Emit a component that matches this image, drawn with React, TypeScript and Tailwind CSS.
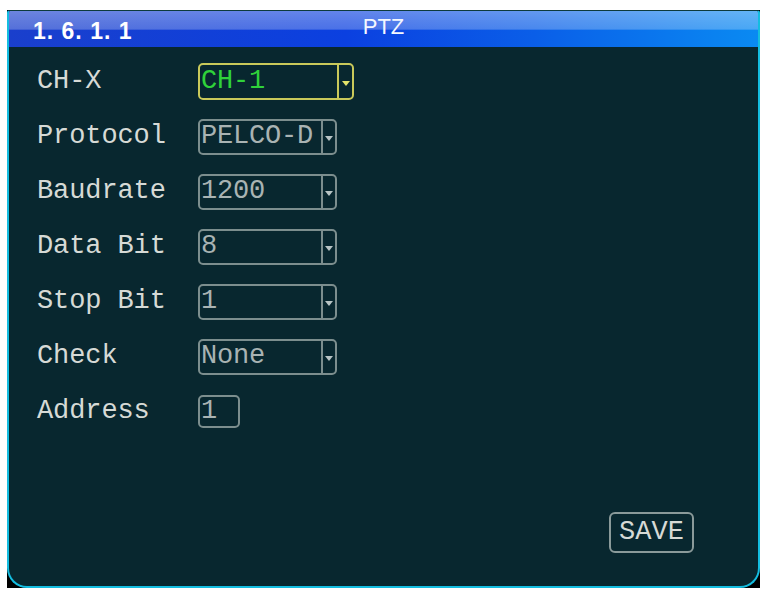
const rows = [
  { label: "Protocol", value: "PELCO-D" },
  { label: "Baudrate", value: "1200" },
  { label: "Data Bit", value: "8" },
  { label: "Stop Bit", value: "1" },
  { label: "Check", value: "None" },
];

const mono = "font-['Liberation_Mono',monospace]";

const Arrow = ({ active }: { active?: boolean }) => (
  <span
    className={
      active
        ? "mt-[3px] h-0 w-0 border-x-[4px] border-t-[5px] border-x-transparent border-t-[#e4e46a]"
        : "mt-[3px] h-0 w-0 border-x-[4px] border-t-[5px] border-x-transparent border-t-[#b8c4c4]"
    }
  />
);

const Select = ({ value }: { value: string }) => (
  <div className="flex h-[36px] w-[139px] items-stretch rounded-[5px] border-2 border-[#7c8e8e]">
    <div
      className={`flex flex-1 items-center overflow-hidden whitespace-nowrap pl-[1px] text-[27px] leading-none tracking-[-0.2px] text-[#a9b3b3] ${mono}`}
    >
      {value}
    </div>
    <div className="flex w-[14px] items-center justify-center border-l-2 border-[#7c8e8e]">
      <Arrow />
    </div>
  </div>
);

const Row = ({ label, children }: { label: string; children: React.ReactNode }) => (
  <div className="flex h-[55px] items-center">
    <div
      className={`w-[161px] text-[27px] leading-none tracking-[-0.1px] text-[#d6dad6] ${mono}`}
    >
      {label}
    </div>
    {children}
  </div>
);

export default function App() {
  return (
    <div className="min-h-screen bg-white pl-[7px] pt-[10px]">
      <div className="h-[578px] w-[753px] bg-black">
        <div className="flex h-full flex-col overflow-hidden rounded-t-[3px] rounded-b-[20px] border-x-2 border-b-2 border-t border-[#14bde0] border-t-[#0d3a3c] bg-[#08272f]">
          <div className="grid h-[36px] grid-cols-[1fr_auto_1fr] [background-image:linear-gradient(180deg,rgba(255,255,255,0.36)_0%,rgba(255,255,255,0.26)_50%,rgba(255,255,255,0)_54%),linear-gradient(90deg,#1a3fcc_0%,#0b40e0_45%,#0a5ee8_70%,#0a8af2_100%)]">
            <div className="self-end pb-[4px] pl-[24px] font-['Liberation_Sans',Arial,sans-serif] text-[23px] font-bold leading-none tracking-[1px] text-white">
              1. 6. 1. 1
            </div>
            <div className="self-start pt-[5px] font-['Liberation_Sans',Arial,sans-serif] text-[22px] leading-none text-[#f4f8ff]">
              PTZ
            </div>
            <div />
          </div>

          <div className="flex flex-1 flex-col pt-[7px] pl-[28px]">
            <Row label="CH-X">
              <div className="flex h-[37px] w-[156px] items-stretch rounded-[5px] border-2 border-[#c9c95a]">
                <div
                  className={`flex flex-1 items-center pl-[1px] text-[27px] leading-none tracking-[-0.2px] text-[#2fd23a] ${mono}`}
                >
                  CH-1
                </div>
                <div className="flex w-[15px] items-center justify-center border-l-2 border-[#c9c95a]">
                  <Arrow active />
                </div>
              </div>
            </Row>
            {rows.map((r) => (
              <Row key={r.label} label={r.label}>
                <Select value={r.value} />
              </Row>
            ))}
            <Row label="Address">
              <div
                className={`flex h-[33px] w-[42px] items-center rounded-[5px] border-2 border-[#7c8e8e] pl-[1px] text-[27px] leading-none text-[#a9b3b3] ${mono}`}
              >
                1
              </div>
            </Row>

            <div className="mt-auto flex justify-end pb-[33px] pr-[64px]">
              <div
                className={`flex h-[41px] w-[85px] items-center justify-center rounded-[6px] border-2 border-[#8a9a9a] text-[27px] leading-none text-[#d6dad6] ${mono}`}
              >
                SAVE
              </div>
            </div>
          </div>
        </div>
      </div>
    </div>
  );
}
